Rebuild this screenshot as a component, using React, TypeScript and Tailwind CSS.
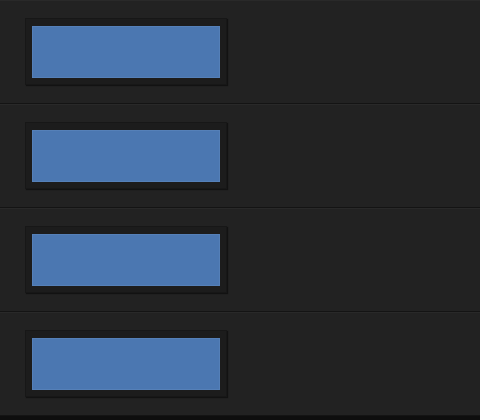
export default function App() {
  const rows = [0, 1, 2, 3];
  return (
    <div className="w-[480px] h-[420px] bg-[#0e0e0e] overflow-hidden">
      {rows.map((i) => (
        <div
          key={i}
          className="h-[104px] bg-[#222222] border-b border-[#141414] shadow-[inset_0_1px_0_#292929] pt-[18px] pl-[25px]"
        >
          <div className="w-[202px] h-[67px] bg-[#1c1c1c] border border-[#171717] shadow-[1px_1px_1px_rgba(0,0,0,0.45)] pt-[7px] pl-[6px]">
            <div className="w-[188px] h-[52px] bg-[#4b77b1] border border-[#5580b8]" />
          </div>
        </div>
      ))}
    </div>
  );
}
